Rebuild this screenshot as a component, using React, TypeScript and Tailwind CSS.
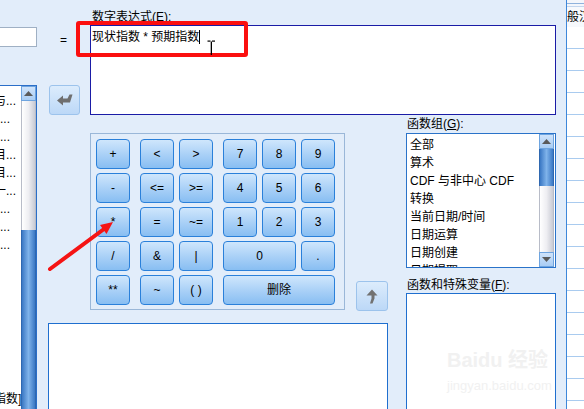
import React from "react";

const F = "font-['Liberation_Sans','Noto_Sans_CJK_SC',sans-serif]";

function Key({ label, w = "w-[34px]", ml = "" }: { label: string; w?: string; ml?: string }) {
  return (
    <div
      className={`${w} ${ml} h-[30px] shrink-0 flex items-center justify-center rounded-[4px] border border-[#2a80da] bg-linear-to-b from-[#cfe6fc] via-[#abd1f7] to-[#88bef2] text-[12px] leading-none text-black`}
    >
      {label}
    </div>
  );
}

function UpArrowBox({ down = false }: { down?: boolean }) {
  return (
    <div className="h-[15px] w-full shrink-0 flex items-center justify-center bg-linear-to-b from-[#cfe3fa] to-[#a9cdf4] border border-[#6ea4df]">
      <svg width="9" height="5" viewBox="0 0 9 5">
        {down ? <polygon points="0,0 9,0 4.5,5" fill="#5a5a5a" /> : <polygon points="0,5 9,5 4.5,0" fill="#5a5a5a" />}
      </svg>
    </div>
  );
}

function Thumb({ h }: { h: string }) {
  return <div className={`${h} w-full shrink-0 bg-linear-to-r from-[#3a78c4] via-[#7fb3ea] to-[#3a78c4] border-x border-[#2f68b0]`} />;
}

function Track({ h }: { h: string }) {
  return <div className={`${h} w-full shrink-0 bg-linear-to-r from-[#ffffff] via-[#eeeef2] to-[#c9cbd4] border-x border-[#b8bcc8]`} />;
}

export default function App() {
  const leftRows: { t: string; w: string }[] = [
    { t: "与...", w: "w-[16px]" },
    { t: "...", w: "w-[10px]" },
    { t: "...", w: "w-[10px]" },
    { t: "目...", w: "w-[16px]" },
    { t: "目...", w: "w-[16px]" },
    { t: "一...", w: "w-[16px]" },
    { t: "...", w: "w-[10px]" },
    { t: "...", w: "w-[10px]" },
    { t: "...", w: "w-[10px]" },
  ];
  const funcs = ["全部", "算术", "CDF 与非中心 CDF", "转换", "当前日期/时间", "日期运算", "日期创建", "日期提取"];
  const gridRows = Array.from({ length: 17 });

  return (
    <div className={`${F} relative w-[584px] h-[409px] overflow-hidden flex bg-[#e2edfa] text-black text-[12px]`}>
      {/* Dialog area */}
      <div className="w-[566px] h-full flex shrink-0">
        {/* Left column: variable list */}
        <div className="w-[37px] h-full flex flex-col shrink-0">
          <div className="mt-[27px] h-[20px] bg-white border border-l-0 border-[#9fb0c4]" />
          <div className="mt-[38px] flex-1 flex border-t border-r border-[#2a6ec8] bg-white overflow-hidden">
            <div className="w-[21px] relative flex flex-col pt-[6px] overflow-hidden">
              {leftRows.map((r, i) => (
                <div key={i} className="h-[18px] leading-[18px] relative overflow-hidden">
                  <div className={`${r.w} absolute left-0 text-right whitespace-nowrap flex justify-end`}>
                    <span className="whitespace-nowrap">{r.t}</span>
                  </div>
                </div>
              ))}
              <div className="absolute left-0 top-[306px] whitespace-nowrap leading-[14px] -ml-[6px]">指数]</div>
            </div>
            <div className="w-[15px] flex flex-col">
              <UpArrowBox />
              <Track h="h-[129px]" />
              <div className="flex-1 w-full bg-linear-to-r from-[#3a78c4] via-[#7fb3ea] to-[#3a78c4] border-x border-[#2f68b0]" />
            </div>
          </div>
        </div>

        {/* Rest */}
        <div className="w-[529px] h-full flex flex-col shrink-0">
          {/* Top section */}
          <div className="h-[115px] flex shrink-0">
            <div className="w-[53px] flex flex-col shrink-0">
              <div className="pt-[32px] pl-[23px] h-[48px] leading-[16px] text-[12px]">=</div>
              <div className="mt-[37px] ml-[12px] w-[31px] h-[31px] rounded-[3px] border border-[#9cc3ec] bg-linear-to-b from-[#dcecfc] to-[#bcd8f7] flex items-center justify-center">
                <svg width="16" height="12" viewBox="0 0 16 12">
                  <polygon points="0,6.5 6,1.5 6,4.5 10.5,4.5 12.5,0.5 15.5,0.5 13,8.5 6,8.5 6,11.5" fill="#6f6f6f" />
                </svg>
              </div>
            </div>
            <div className="w-[466px] flex flex-col shrink-0">
              <div className="pt-[9px] h-[25px] leading-[16px] pl-[2px] whitespace-nowrap">
                数字表达式(<span className="underline">E</span>):
              </div>
              <div className="h-[90px] bg-white border border-[#1a1ca6] pl-[1px] pt-[2px]">
                <div className="h-[18px] leading-[18px] flex items-center whitespace-nowrap">
                  <span>现状指数 * 预期指数</span>
                  <span className="inline-block w-px h-[14px] bg-black" />
                </div>
              </div>
            </div>
          </div>

          {/* Bottom section */}
          <div className="flex-1 flex">
            <div className="w-[369px] flex flex-col shrink-0">
              <div className="h-[208px] flex items-start shrink-0">
                <div className="ml-[53px] mt-[18px] w-[255px] h-[177px] border border-[#9ab7d8] pl-[5px] pt-[5px] flex flex-col gap-[4px]">
                  <div className="flex">
                    <Key label="+" />
                    <Key label="<" ml="ml-[10px]" />
                    <Key label=">" ml="ml-[5px]" />
                    <Key label="7" ml="ml-[10px]" />
                    <Key label="8" ml="ml-[5px]" />
                    <Key label="9" ml="ml-[5px]" />
                  </div>
                  <div className="flex">
                    <Key label="-" />
                    <Key label="<=" ml="ml-[10px]" />
                    <Key label=">=" ml="ml-[5px]" />
                    <Key label="4" ml="ml-[10px]" />
                    <Key label="5" ml="ml-[5px]" />
                    <Key label="6" ml="ml-[5px]" />
                  </div>
                  <div className="flex">
                    <Key label="*" />
                    <Key label="=" ml="ml-[10px]" />
                    <Key label="~=" ml="ml-[5px]" />
                    <Key label="1" ml="ml-[10px]" />
                    <Key label="2" ml="ml-[5px]" />
                    <Key label="3" ml="ml-[5px]" />
                  </div>
                  <div className="flex">
                    <Key label="/" />
                    <Key label="&" ml="ml-[10px]" />
                    <Key label="|" ml="ml-[5px]" />
                    <Key label="0" w="w-[73px]" ml="ml-[10px]" />
                    <Key label="." ml="ml-[5px]" />
                  </div>
                  <div className="flex">
                    <Key label="**" />
                    <Key label="~" ml="ml-[10px]" />
                    <Key label="( )" ml="ml-[5px]" />
                    <Key label="删除" w="w-[112px]" ml="ml-[10px]" />
                  </div>
                </div>
                <div className="ml-[11px] mt-[166px] w-[32px] h-[30px] rounded-[3px] border border-[#9cc3ec] bg-linear-to-b from-[#dcecfc] to-[#bcd8f7] flex items-center justify-center">
                  <svg width="12" height="15" viewBox="0 0 12 15">
                    <polygon points="6,0.5 11.5,6.5 8.5,6.5 8.5,9.5 6.5,14.5 4,14.5 5.5,9.5 5.5,6.5 0.5,6.5" fill="#727272" />
                  </svg>
                </div>
              </div>
              <div className="ml-[11px] w-[340px] flex-1 bg-white border border-b-0 border-[#1f6fcf]" />
            </div>

            {/* Function column */}
            <div className="w-[150px] flex flex-col shrink-0">
              <div className="h-[18px] leading-[18px] pl-[1px] whitespace-nowrap">
                函数组(<span className="underline">G</span>):
              </div>
              <div className="h-[135px] border border-[#2a73c9] bg-white flex shrink-0 overflow-hidden">
                <div className="flex-1 pt-[2px] pl-[3px] overflow-hidden">
                  {funcs.map((f) => (
                    <div key={f} className="h-[18px] leading-[18px] whitespace-nowrap">
                      {f}
                    </div>
                  ))}
                </div>
                <div className="w-[15px] mr-px flex flex-col">
                  <UpArrowBox />
                  <Thumb h="h-[37px]" />
                  <div className="flex-1 w-full bg-linear-to-r from-[#ffffff] via-[#eeeef2] to-[#c9cbd4] border-x border-[#b8bcc8]" />
                  <UpArrowBox down />
                </div>
              </div>
              <div className="mt-[9px] h-[16px] leading-[16px] pl-[1px] whitespace-nowrap">
                函数和特殊变量(<span className="underline">F</span>):
              </div>
              <div className="flex-1 bg-white border border-b-0 border-[#1f6fcf] relative overflow-hidden">
                <div className="absolute left-[40px] top-[54px] text-[20px] leading-[24px] font-bold text-[#f1f1f1] whitespace-nowrap font-['Liberation_Sans','Noto_Sans_CJK_SC',sans-serif]">
                  Baidu 经验
                </div>
                <div className="absolute left-[40px] top-[84px] text-[13px] leading-[16px] text-[#f1f1f1] whitespace-nowrap font-['Liberation_Sans',sans-serif]">
                  jingyan.baidu.com
                </div>
              </div>
            </div>
          </div>
        </div>
      </div>

      {/* Data grid strip */}
      <div className="w-[18px] h-full border-l border-[#3d87da] bg-white flex flex-col shrink-0 overflow-hidden">
        <div className="h-[3px] bg-[#f3f6fb] shrink-0" />
        <div className="h-px bg-[#8fb2dc] shrink-0" />
        <div className="h-[3px] bg-[#f3f6fb] border-b border-[#c3d6ee] shrink-0" />
        <div className="h-[20px] leading-[20px] bg-[#f7f9fc] whitespace-nowrap overflow-hidden shrink-0">般汉</div>
        {gridRows.map((_, i) => (
          <div key={i} className="h-[22px] border-b border-[#a9cbef] shrink-0" />
        ))}
      </div>

      {/* Overlays: red highlight, arrow, cursor */}
      <div className="absolute left-[76px] top-[21px] w-[172px] h-[36px] border-4 border-[#fb0f0f] rounded-[3px] pointer-events-none" />
      <svg className="absolute left-0 top-0 pointer-events-none" width="584" height="409" viewBox="0 0 584 409">
        <line x1="50" y1="269" x2="104" y2="229" stroke="#f51414" strokeWidth="4" strokeLinecap="round" />
        <polygon points="113,222 106.5,234 100,225" fill="#f51414" />
        <rect x="207.5" y="40.5" width="3" height="1.2" fill="#000" />
        <rect x="212" y="40.5" width="3" height="1.2" fill="#000" />
        <rect x="210.7" y="41.5" width="1.3" height="13.5" fill="#000" />
      </svg>
    </div>
  );
}
